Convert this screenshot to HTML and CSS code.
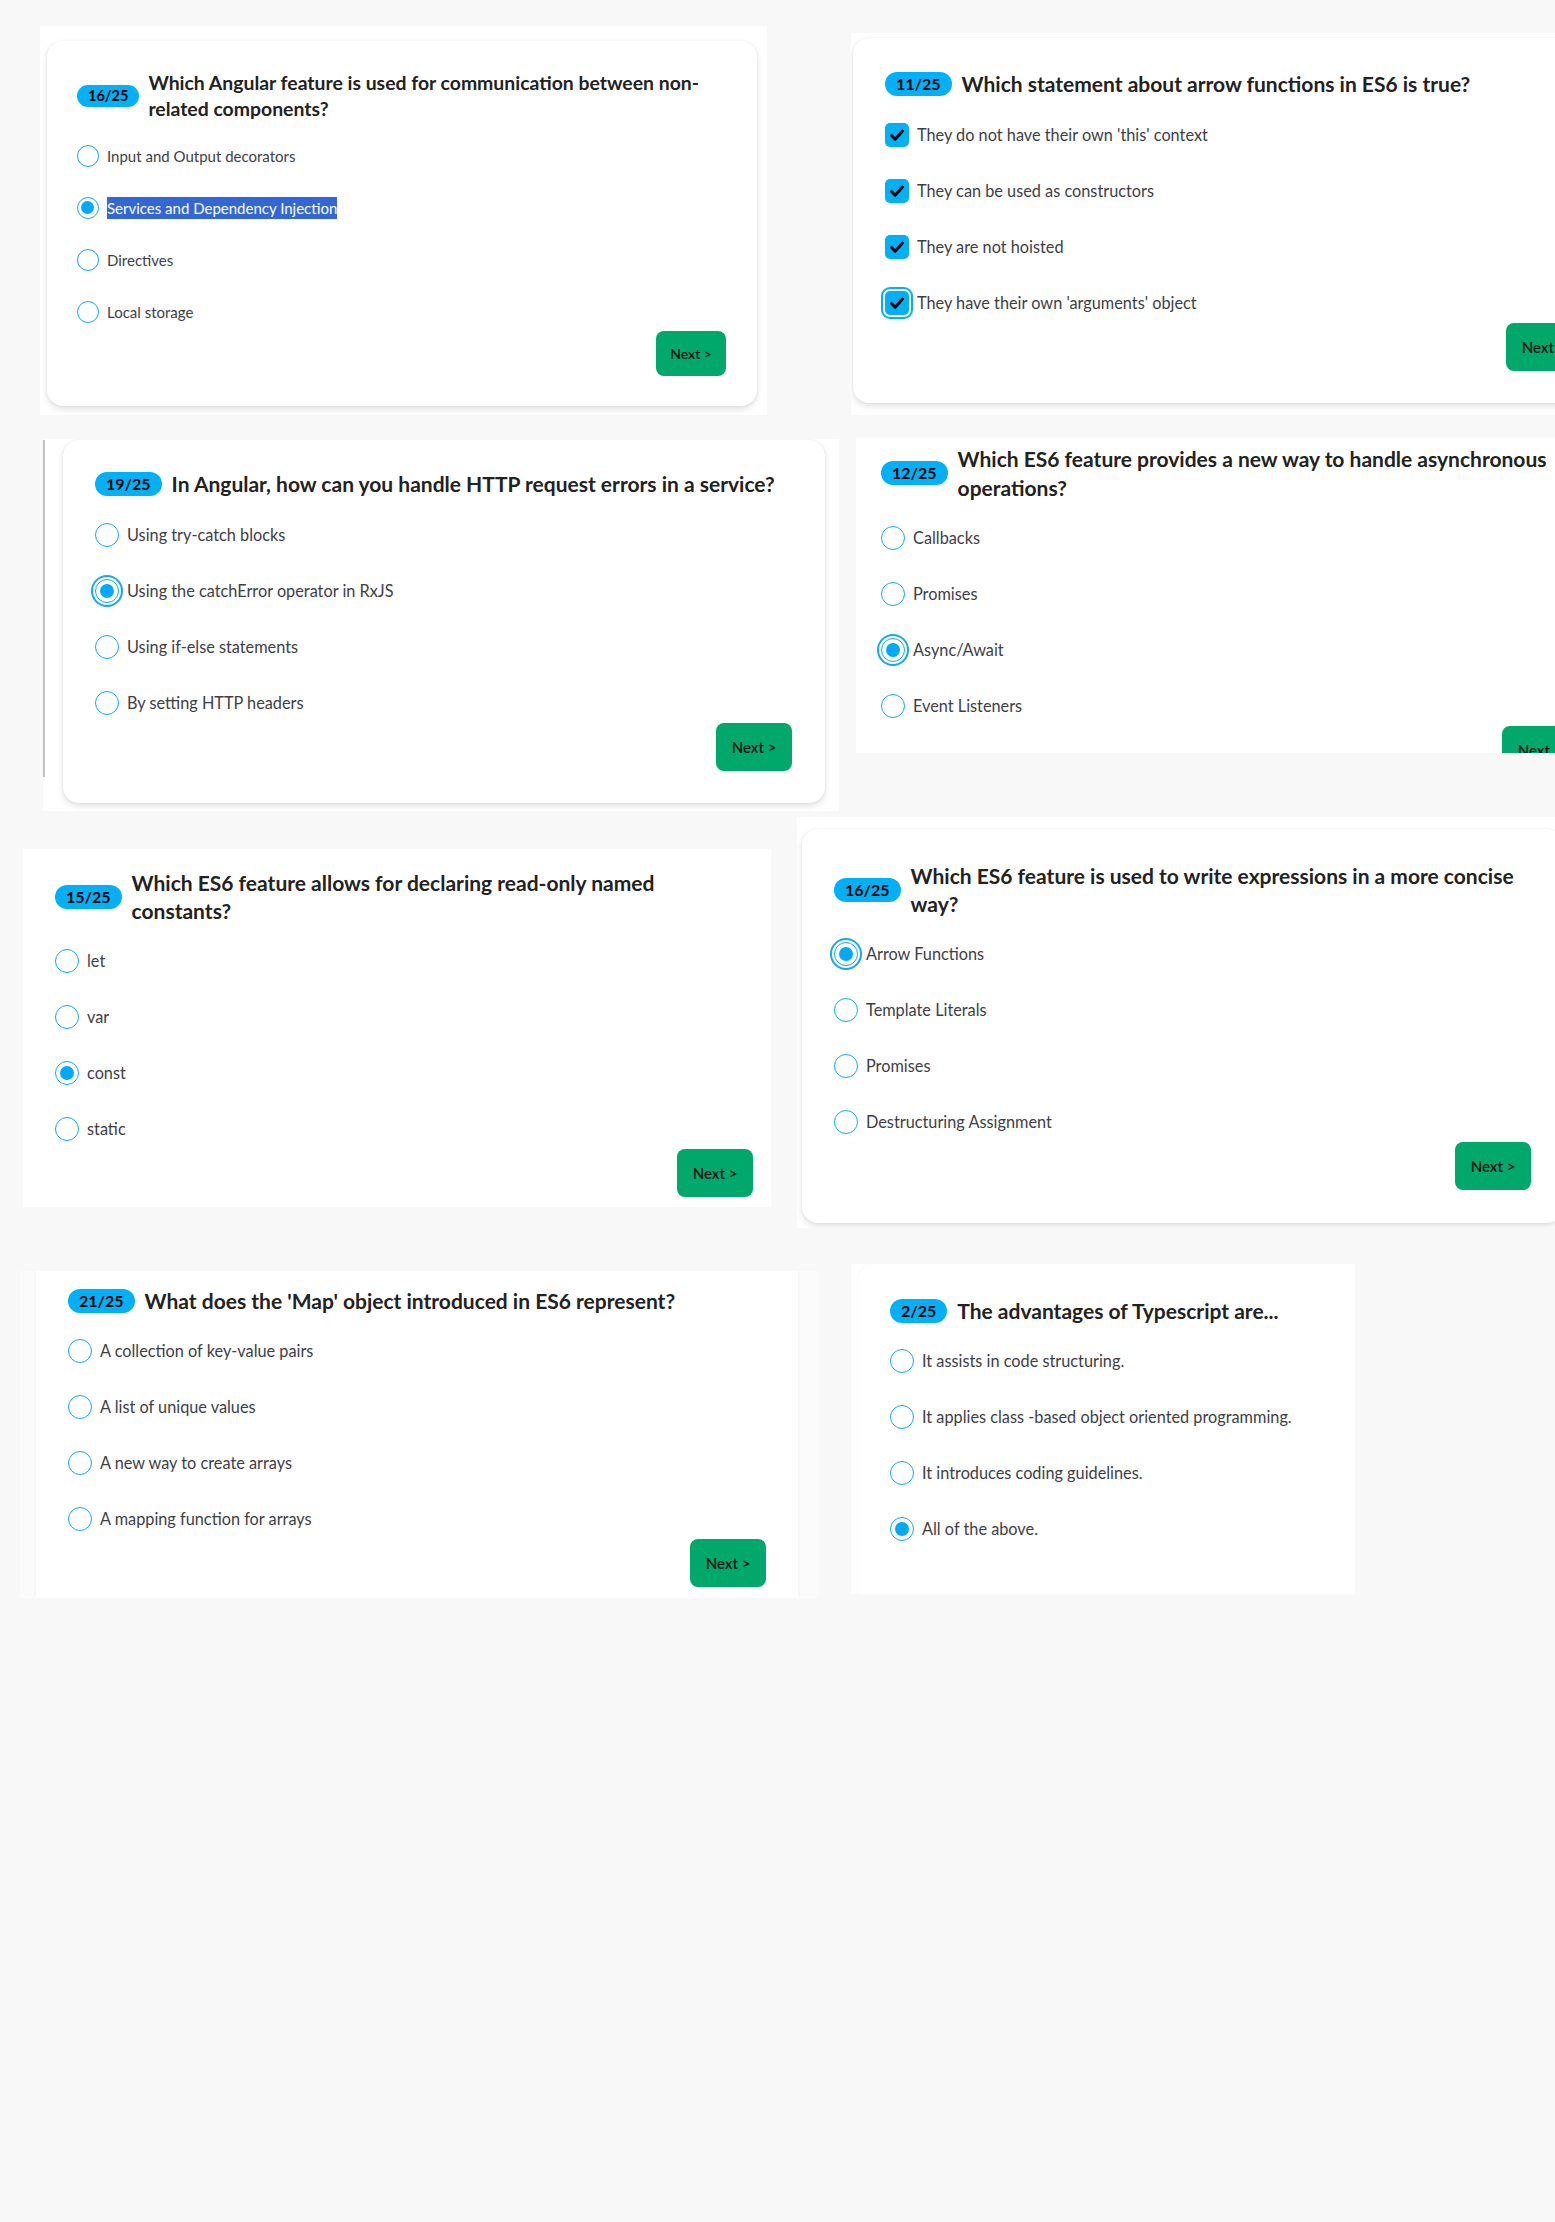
FILE: index.html
```html
<!DOCTYPE html>
<html lang="en">
<head>
<meta charset="utf-8">
<title>Quiz screenshots</title>
<link rel="stylesheet" href="styles.css">
</head>
<body>
<div class="canvas">

  <section class="shot p1">
    <div class="card shadow small">
      <div class="q-head">
        <span class="badge">16/25</span>
        <h2 class="q">Which Angular feature is used for communication between non-related components?</h2>
      </div>
      <ul class="opts">
        <li class="opt"><span class="radio"></span><span class="label">Input and Output decorators</span></li>
        <li class="opt"><span class="radio on"></span><span class="label sel">Services and Dependency Injection</span></li>
        <li class="opt"><span class="radio"></span><span class="label">Directives</span></li>
        <li class="opt"><span class="radio"></span><span class="label">Local storage</span></li>
      </ul>
      <div class="foot"><button class="next">Next &gt;</button></div>
    </div>
  </section>

  <section class="shot p2">
    <div class="card shadow">
      <div class="q-head">
        <span class="badge">11/25</span>
        <h2 class="q">Which statement about arrow functions in ES6 is true?</h2>
      </div>
      <ul class="opts">
        <li class="opt"><span class="check"><svg viewBox="0 0 24 24" width="24" height="24"><path d="M6.5 12.5 L10.2 16.2 L17.5 8" fill="none" stroke="#000" stroke-width="3" stroke-linecap="round" stroke-linejoin="round"/></svg></span><span class="label">They do not have their own 'this' context</span></li>
        <li class="opt"><span class="check"><svg viewBox="0 0 24 24" width="24" height="24"><path d="M6.5 12.5 L10.2 16.2 L17.5 8" fill="none" stroke="#000" stroke-width="3" stroke-linecap="round" stroke-linejoin="round"/></svg></span><span class="label">They can be used as constructors</span></li>
        <li class="opt"><span class="check"><svg viewBox="0 0 24 24" width="24" height="24"><path d="M6.5 12.5 L10.2 16.2 L17.5 8" fill="none" stroke="#000" stroke-width="3" stroke-linecap="round" stroke-linejoin="round"/></svg></span><span class="label">They are not hoisted</span></li>
        <li class="opt"><span class="check focus"><svg viewBox="0 0 24 24" width="24" height="24"><path d="M6.5 12.5 L10.2 16.2 L17.5 8" fill="none" stroke="#000" stroke-width="3" stroke-linecap="round" stroke-linejoin="round"/></svg></span><span class="label">They have their own 'arguments' object</span></li>
      </ul>
      <div class="foot"><button class="next">Next &gt;</button></div>
    </div>
  </section>

  <section class="shot p3">
    <div class="edge"></div>
    <div class="card shadow">
      <div class="q-head">
        <span class="badge">19/25</span>
        <h2 class="q">In Angular, how can you handle HTTP request errors in a service?</h2>
      </div>
      <ul class="opts">
        <li class="opt"><span class="radio"></span><span class="label">Using try-catch blocks</span></li>
        <li class="opt"><span class="radio on focus"></span><span class="label">Using the catchError operator in RxJS</span></li>
        <li class="opt"><span class="radio"></span><span class="label">Using if-else statements</span></li>
        <li class="opt"><span class="radio"></span><span class="label">By setting HTTP headers</span></li>
      </ul>
      <div class="foot"><button class="next">Next &gt;</button></div>
    </div>
  </section>

  <section class="shot p4">
    <div class="card">
      <div class="q-head">
        <span class="badge">12/25</span>
        <h2 class="q">Which ES6 feature provides a new way to handle asynchronous operations?</h2>
      </div>
      <ul class="opts">
        <li class="opt"><span class="radio"></span><span class="label">Callbacks</span></li>
        <li class="opt"><span class="radio"></span><span class="label">Promises</span></li>
        <li class="opt"><span class="radio on focus"></span><span class="label">Async/Await</span></li>
        <li class="opt"><span class="radio"></span><span class="label">Event Listeners</span></li>
      </ul>
      <div class="foot"><button class="next">Next &gt;</button></div>
    </div>
  </section>

  <section class="shot p5">
    <div class="card">
      <div class="q-head">
        <span class="badge">15/25</span>
        <h2 class="q">Which ES6 feature allows for declaring read-only named constants?</h2>
      </div>
      <ul class="opts">
        <li class="opt"><span class="radio"></span><span class="label">let</span></li>
        <li class="opt"><span class="radio"></span><span class="label">var</span></li>
        <li class="opt"><span class="radio on"></span><span class="label">const</span></li>
        <li class="opt"><span class="radio"></span><span class="label">static</span></li>
      </ul>
      <div class="foot"><button class="next">Next &gt;</button></div>
    </div>
  </section>

  <section class="shot p6">
    <div class="card shadow">
      <div class="q-head">
        <span class="badge">16/25</span>
        <h2 class="q">Which ES6 feature is used to write expressions in a more concise way?</h2>
      </div>
      <ul class="opts">
        <li class="opt"><span class="radio on focus"></span><span class="label">Arrow Functions</span></li>
        <li class="opt"><span class="radio"></span><span class="label">Template Literals</span></li>
        <li class="opt"><span class="radio"></span><span class="label">Promises</span></li>
        <li class="opt"><span class="radio"></span><span class="label">Destructuring Assignment</span></li>
      </ul>
      <div class="foot"><button class="next">Next &gt;</button></div>
    </div>
  </section>

  <section class="shot p7">
    <div class="card faint">
      <div class="q-head">
        <span class="badge">21/25</span>
        <h2 class="q">What does the 'Map' object introduced in ES6 represent?</h2>
      </div>
      <ul class="opts">
        <li class="opt"><span class="radio"></span><span class="label">A collection of key-value pairs</span></li>
        <li class="opt"><span class="radio"></span><span class="label">A list of unique values</span></li>
        <li class="opt"><span class="radio"></span><span class="label">A new way to create arrays</span></li>
        <li class="opt"><span class="radio"></span><span class="label">A mapping function for arrays</span></li>
      </ul>
      <div class="foot"><button class="next">Next &gt;</button></div>
    </div>
  </section>

  <section class="shot p8">
    <div class="card faint">
      <div class="q-head">
        <span class="badge">2/25</span>
        <h2 class="q">The advantages of Typescript are...</h2>
      </div>
      <ul class="opts">
        <li class="opt"><span class="radio"></span><span class="label">It assists in code structuring.</span></li>
        <li class="opt"><span class="radio"></span><span class="label">It applies class -based object oriented programming.</span></li>
        <li class="opt"><span class="radio"></span><span class="label">It introduces coding guidelines.</span></li>
        <li class="opt"><span class="radio on"></span><span class="label">All of the above.</span></li>
      </ul>
    </div>
  </section>

</div>
</body>
</html>
```

FILE: styles.css
```css
html, body {
  margin: 0;
  padding: 0;
  background: #f8f8f8;
  overflow: hidden;
}

.canvas {
  position: relative;
  width: 1555px;
  height: 2222px;
  overflow: hidden;
  font-family: "Lato", "Noto Sans", sans-serif;
  color: #222;
}

/* each pasted screenshot */
.shot {
  position: absolute;
  overflow: hidden;
  background: #fff;
  box-sizing: border-box;
}

.card {
  box-sizing: border-box;
  background: #fff;
  border-radius: 16px;
  display: flex;
  flex-direction: column;
  flex: none;
}

.card.shadow {
  box-shadow: 0 3px 6px rgba(0, 0, 0, 0.13), 0 0 2px rgba(0, 0, 0, 0.07);
}

.card.faint {
  box-shadow: 0 0 3px rgba(0, 0, 0, 0.06);
}

/* header */
.q-head {
  display: flex;
  align-items: center;
  gap: 10px;
}

.badge {
  flex: none;
  height: 24px;
  line-height: 24px;
  padding: 0 11px;
  border-radius: 12px;
  background: #03b0f5;
  color: #000;
  font-weight: 700;
  font-size: 16px;
}

.q {
  margin: 0;
  font-size: 21px;
  line-height: 28px;
  font-weight: 700;
  color: #222;
  flex: 0 1 auto;
  min-width: 0;
}

/* options */
.opts {
  list-style: none;
  margin: 24px 0 0;
  padding: 0;
  display: flex;
  flex-direction: column;
  gap: 32px;
}

.opt {
  display: flex;
  align-items: center;
  height: 24px;
  gap: 8px;
}

.label {
  font-size: 16.3px;
  line-height: 22px;
  color: #3e3e48;
  white-space: nowrap;
}

.label.sel {
  background: #3367d6;
  color: #fff;
}

.radio {
  flex: none;
  width: 24px;
  height: 24px;
  box-sizing: border-box;
  border: 1.5px solid #14a8f0;
  border-radius: 50%;
  background: #fff;
  position: relative;
}

.radio.on::after {
  content: "";
  position: absolute;
  left: 3.5px;
  top: 3.5px;
  width: 14px;
  height: 14px;
  border-radius: 50%;
  background: #03a9f4;
}

.radio.focus {
  box-shadow: 0 0 0 2px #fff, 0 0 0 4px #14a8f0;
}

.check {
  flex: none;
  width: 24px;
  height: 24px;
  border-radius: 5px;
  background: #03b0f5;
  display: flex;
}

.check.focus {
  box-shadow: 0 0 0 2px #fff, 0 0 0 4px #03b0f5;
}

/* footer */
.foot {
  display: flex;
  justify-content: flex-end;
  margin-top: 8px;
}

.next {
  width: 76px;
  height: 48px;
  border: 0;
  border-radius: 8px;
  background: #00a86b;
  color: #111;
  font-family: inherit;
  font-size: 15px;
  font-weight: 600;
  padding: 0;
}

/* small-scale screenshot */
.small .q-head { gap: 9px; }
.small .badge {
  height: 22px;
  line-height: 22px;
  font-size: 14.5px;
  padding: 0 11px;
  border-radius: 11px;
}
.small .q { font-size: 19.4px; line-height: 26px; }
.small .opts { margin-top: 23px; gap: 30px; }
.small .opt { height: 22px; gap: 8px; }
.small .radio { width: 22px; height: 22px; }
.small .radio.on::after { left: 3px; top: 3px; width: 13px; height: 13px; }
.small .label { font-size: 15px; line-height: 22px; }
.small .next { width: 70px; height: 45px; font-size: 14px; }

/* panel 1 */
.p1 { left: 40px; top: 26px; width: 727px; height: 389px; }
.p1 .card {
  margin: 15px 10px 0 7px;
  height: 365px;
  padding: 29px 31px 0 30px;
}
.p1 .q { max-width: 570px; }

/* panel 2 */
.p2 { left: 851px; top: 33px; width: 704px; height: 382px; }
.p2 .card {
  margin: 5px 0 0 2px;
  width: 761px;
  height: 365px;
  padding: 32px 32px 0 32px;
}
.p2 .opts { margin-top: 25px; }

/* panel 3 */
.p3 {
  left: 43px; top: 439px; width: 796px; height: 372px;
  display: flex;
  align-items: flex-start;
}
.p3 .edge {
  flex: none;
  width: 2px;
  height: 337px;
  margin-top: 1px;
  background: #c2c2c2;
}
.p3 .card {
  margin: 1px 0 0 18px;
  width: 762px;
  height: 363px;
  padding: 30px 33px 0 32px;
}
.p3 .opts { margin-top: 25px; }

/* panel 4 */
.p4 { left: 856px; top: 438px; width: 699px; height: 315px; }
.p4 .card {
  width: 754px;
  padding: 6px 32px 0 25px;
  border-radius: 0;
}
.p4 .q { line-height: 29px; max-width: 610px; }
.p4 .opts { margin-top: 24px; }

/* panel 5 */
.p5 { left: 23px; top: 849px; width: 748px; height: 358px; }
.p5 .card {
  width: 748px;
  height: 358px;
  padding: 20px 18px 0 32px;
  border-radius: 0;
}
.p5 .q { max-width: 560px; }

/* panel 6 */
.p6 { left: 797px; top: 817px; width: 758px; height: 411px; }
.p6 .card {
  margin: 12px 0 0 5px;
  width: 761px;
  height: 394px;
  padding: 33px 32px 0 32px;
}
.p6 .q { max-width: 612px; }

/* panel 7 */
.p7 { left: 20px; top: 1271px; width: 799px; height: 327px; background: #fbfbfb; }
.p7 .card {
  margin: 0 21px 0 16px;
  width: 762px;
  height: 327px;
  padding: 16px 32px 0 32px;
  border-radius: 0;
}

/* panel 8 */
.p8 { left: 851px; top: 1264px; width: 504px; height: 330px; }
.p8 .card {
  margin-left: 7px;
  width: 600px;
  height: 340px;
  padding: 33px 0 0 32px;
  border-radius: 16px 0 0 0;
}
```
